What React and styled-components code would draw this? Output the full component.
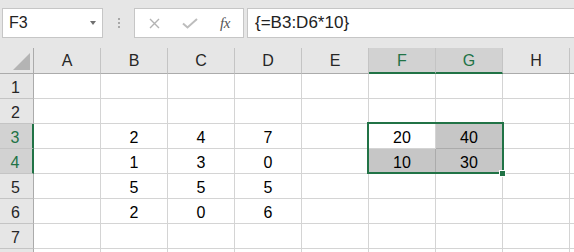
import styled, { createGlobalStyle, css } from "styled-components"

const GlobalStyle = createGlobalStyle`
  html, body {
    margin: 0;
    padding: 0;
    background: #ffffff;
    overflow: hidden;
  }
  body {
    font-family: "Liberation Sans", Arial, sans-serif;
  }
`;

const Page = styled.div`
  width: 574px;
  height: 252px;
  overflow: hidden;
  background: #e6e6e6;
`;

const Toolbar = styled.div`
  display: flex;
  align-items: center;
  height: 48px;
  box-sizing: border-box;
  padding: 8px 0 10px 2px;
`;

const NameBox = styled.div`
  display: flex;
  align-items: center;
  justify-content: space-between;
  box-sizing: border-box;
  width: 101px;
  height: 30px;
  padding: 0 6px 0 6px;
  background: #ffffff;
  border: 1px solid #c6c6c6;
  font-size: 16px;
  color: #222;
`;

const Arrow = styled.span`
  width: 0;
  height: 0;
  border-left: 3.5px solid transparent;
  border-right: 3.5px solid transparent;
  border-top: 4px solid #707070;
`;

const Grip = styled.div`
  display: flex;
  flex-direction: column;
  align-items: center;
  justify-content: center;
  gap: 2px;
  width: 31px;
  height: 30px;
`;

const GripDot = styled.span`
  width: 2px;
  height: 2px;
  background: #a8a8a8;
`;

const ButtonBox = styled.div`
  display: flex;
  align-items: center;
  box-sizing: border-box;
  width: 110px;
  height: 30px;
  padding: 0 0 0 14px;
  background: #ffffff;
  border: 1px solid #c6c6c6;
`;

const IconSlot = styled.span`
  display: flex;
  align-items: center;
  width: ${props => props.w}px;
`;

const Fx = styled.span`
  font-family: "Liberation Serif", "Times New Roman", serif;
  font-style: italic;
  font-size: 15px;
  color: #555;
  letter-spacing: -0.5px;
`;

const FormulaInput = styled.div`
  flex: 1;
  display: flex;
  align-items: center;
  box-sizing: border-box;
  height: 30px;
  margin: 0 -10px 0 3px;
  padding-left: 7px;
  background: #ffffff;
  border: 1px solid #c6c6c6;
  font-size: 17px;
  color: #222;
`;

const Sheet = styled.div`
  position: relative;
  display: grid;
  grid-template-columns: 34px repeat(8, 67px) 40px;
  grid-template-rows: 26px repeat(8, 25px);
  background: #ffffff;
`;

const HeaderCell = styled.div`
  display: flex;
  align-items: center;
  justify-content: center;
  box-sizing: border-box;
  background: ${props => (props.selected ? "#d2d2d2" : "#e6e6e6")};
  color: ${props => (props.selected ? "#217346" : "#262626")};
  font-size: 16px;
  border-right: 1px solid #c4c4c4;
  border-bottom: ${props => (props.selected ? "2px solid #217346" : "1px solid #ababab")};
  padding-top: 1px;
`;

const RowHeader = styled.div`
  display: flex;
  align-items: flex-end;
  justify-content: center;
  box-sizing: border-box;
  padding-bottom: 1px;
  padding-right: 2px;
  background: ${props => (props.selected ? "#d2d2d2" : "#e6e6e6")};
  color: ${props => (props.selected ? "#217346" : "#262626")};
  font-size: 16px;
  border-bottom: 1px solid #c4c4c4;
  border-right: ${props => (props.selected ? "2px solid #217346" : "1px solid #ababab")};
`;

const Corner = styled.div`
  box-sizing: border-box;
  background: #e6e6e6;
  border-right: 1px solid #ababab;
  border-bottom: 1px solid #ababab;
  display: flex;
  align-items: flex-end;
  justify-content: flex-end;
  padding: 0 3px 3px 0;
`;

const Triangle = styled.span`
  width: 0;
  height: 0;
  border-left: 17px solid transparent;
  border-bottom: 17px solid #b4b4b4;
`;

const Cell = styled.div`
  display: flex;
  align-items: flex-end;
  justify-content: center;
  box-sizing: border-box;
  padding-bottom: 1px;
  font-size: 16px;
  color: #000;
  border-right: 1px solid #d4d4d4;
  border-bottom: 1px solid #d4d4d4;
  ${props => props.inRange && !props.active && css`
    background: #c6c6c6;
    border-color: #ababab;
  `}
`;

const Selection = styled.div`
  position: absolute;
  left: 367px;
  top: 74px;
  width: 137px;
  height: 52px;
  box-sizing: border-box;
  border: 2px solid #217346;
  pointer-events: none;
`;

const FillHandle = styled.div`
  position: absolute;
  left: 499px;
  top: 122px;
  width: 7px;
  height: 7px;
  box-sizing: border-box;
  background: #217346;
  border: 1px solid #ffffff;
`;

// the last column (I) and last row (8) are only a sliver wide, so no label
const columns = ["A", "B", "C", "D", "E", "F", "G", "H", "I"];
const labelled = c => c !== "I";

const values = {
  3: { B: 2, C: 4, D: 7, F: 20, G: 40 },
  4: { B: 1, C: 3, D: 0, F: 10, G: 30 },
  5: { B: 5, C: 5, D: 5 },
  6: { B: 2, C: 0, D: 6 },
};

const selCols = ["F", "G"];
const selRows = [3, 4];

const CrossIcon = () => (
  <svg width="11" height="11" viewBox="0 0 11 11">
    <path d="M1 1 L10 10 M10 1 L1 10" stroke="#b3b3b3" strokeWidth="1.4" fill="none" />
  </svg>
);

const CheckIcon = () => (
  <svg width="16" height="11" viewBox="0 0 16 11">
    <path d="M1 5.5 L5.5 9.5 L15 1" stroke="#bdbdbd" strokeWidth="2" fill="none" />
  </svg>
);

export default () => {
  const rows = [1, 2, 3, 4, 5, 6, 7, 8];

  return (
    <>
      <GlobalStyle />
      <Page>
        <Toolbar>
          <NameBox>
            F3
            <Arrow />
          </NameBox>

          <Grip>
            <GripDot />
            <GripDot />
            <GripDot />
          </Grip>

          <ButtonBox>
            <IconSlot w={33}><CrossIcon /></IconSlot>
            <IconSlot w={38}><CheckIcon /></IconSlot>
            <Fx>fx</Fx>
          </ButtonBox>

          <FormulaInput>{"{=B3:D6*10}"}</FormulaInput>
        </Toolbar>

        <Sheet>
          <Corner><Triangle /></Corner>
          {
            columns.map(c => (
              <HeaderCell key={c} selected={selCols.includes(c)}>
                {labelled(c) ? c : null}
              </HeaderCell>
            ))
          }

          {
            rows.map(r => (
              <>
                <RowHeader key={"r" + r} selected={selRows.includes(r)}>
                  {r < 8 ? r : null}
                </RowHeader>
                {
                  columns.map(c => {
                    const inRange = selRows.includes(r) && selCols.includes(c);
                    const v = values[r] ? values[r][c] : undefined;
                    return (
                      <Cell
                        key={c + r}
                        inRange={inRange}
                        active={c === "F" && r === 3}
                      >
                        {v}
                      </Cell>
                    );
                  })
                }
              </>
            ))
          }

          <Selection />
          <FillHandle />
        </Sheet>
      </Page>
    </>
  )
}
